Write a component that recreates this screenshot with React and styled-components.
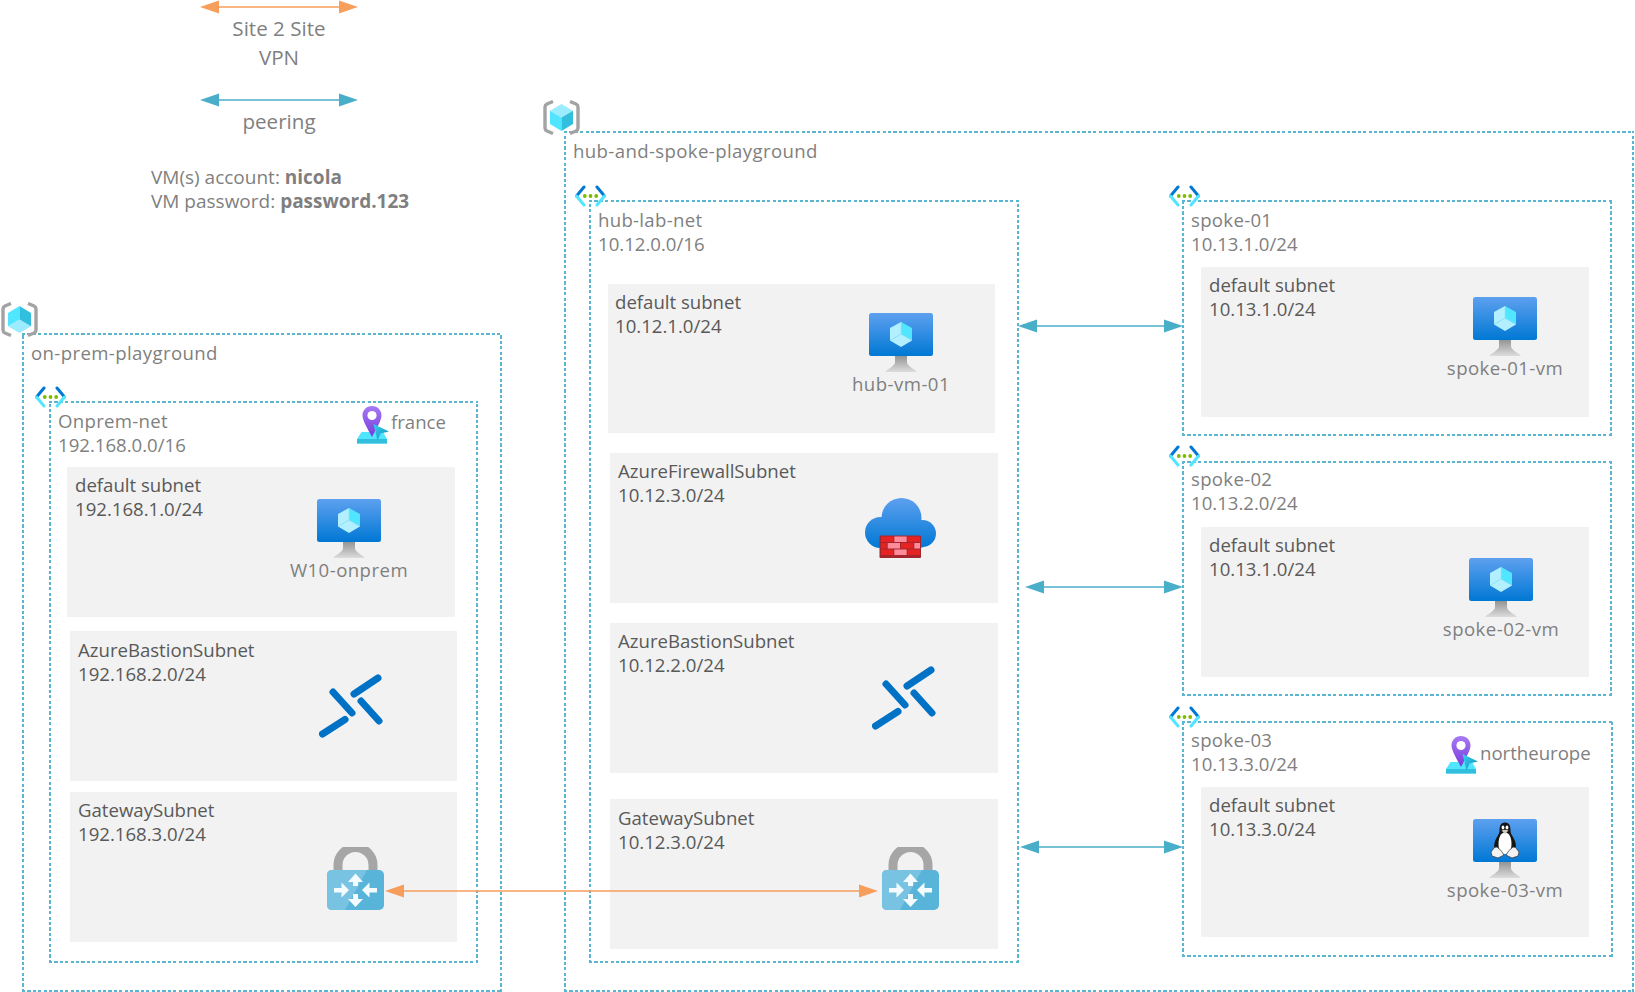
import styled, { createGlobalStyle } from 'styled-components'

const GlobalStyle = createGlobalStyle`
    html, body {
        margin: 0;
        background: #fff;
    }
    body {
        font-family: "Open Sans", "Liberation Sans", sans-serif;
        font-size: 18.6px;
        line-height: 24px;
        color: #7f7f7f;
        overflow: hidden;
    }
`

const DASH = '#5ab5d1'
const hDash = `repeating-linear-gradient(90deg, ${DASH} 0 3.2px, transparent 3.2px 5.4px)`
const vDash = `repeating-linear-gradient(0deg, ${DASH} 0 3.2px, transparent 3.2px 5.4px)`

const Canvas = styled.div`
    position: relative;
    width: 1635px;
    height: 992px;
    overflow: hidden;
`

const Zone = styled.section`
    position: absolute;
    left: ${p => p.$x}px;
    top: ${p => p.$y}px;
    width: ${p => p.$w}px;
    height: ${p => p.$h}px;
    box-sizing: border-box;
    padding: ${p => p.$pad || 8}px 9px;
    background:
        ${hDash} left top / 100% 2px no-repeat,
        ${hDash} left bottom / 100% 2px no-repeat,
        ${vDash} left top / 2px 100% no-repeat,
        ${vDash} right top / 2px 100% no-repeat;
`

const Subnet = styled.div`
    position: absolute;
    left: ${p => p.$x}px;
    top: ${p => p.$y}px;
    width: ${p => p.$w}px;
    height: ${p => p.$h}px;
    box-sizing: border-box;
    background: #f2f2f2;
    padding: ${p => p.$pad || 6}px ${p => p.$padX || 8}px;
    color: #595959;
`

const Line = styled.div`
    white-space: nowrap;
    letter-spacing: ${p => p.$spread || 0}px;
`

const IconSpot = styled.div`
    position: absolute;
    left: ${p => p.$x}px;
    top: ${p => p.$y}px;
    line-height: 0;
`

const VmNode = styled.div`
    position: absolute;
    left: ${p => p.$x}px;
    top: ${p => p.$y}px;
    width: 160px;
    display: flex;
    flex-direction: column;
    align-items: center;
    color: #7f7f7f;
`

const Place = styled.div`
    position: absolute;
    left: ${p => p.$x}px;
    top: ${p => p.$y}px;
    white-space: nowrap;
`

const Legend = styled.aside`
    position: absolute;
    left: 151px;
    top: 0;
    width: 256px;
    display: flex;
    flex-direction: column;
    align-items: center;
`

const Caption = styled.div`
    font-size: 20.6px;
    line-height: 29px;
    text-align: center;
    margin-top: -0.5px;
`

const LegendArrow = styled.div`
    line-height: 0;
    margin-top: ${p => p.$top || 0}px;
`

const Note = styled.div`
    align-self: flex-start;
    margin-top: 29.5px;
    font-size: 19px;
    white-space: nowrap;
    b {
        font-weight: 700;
    }
`

const Link = styled.div`
    position: absolute;
    left: ${p => p.$x}px;
    top: ${p => p.$y}px;
    line-height: 0;
`

const ORANGE = '#f79e5d'
const TEAL = '#49aec8'

const Defs = () => (
    <svg width="0" height="0" style={{ position: 'absolute' }}>
        <defs>
            <linearGradient id="screen" x1="0" y1="0" x2="0" y2="1">
                <stop offset="0" stopColor="#5ea0ef" />
                <stop offset="1" stopColor="#0078d4" />
            </linearGradient>
            <linearGradient id="stand" x1="0" y1="0" x2="0" y2="1">
                <stop offset="0" stopColor="#949494" />
                <stop offset="1" stopColor="#dcdcdc" />
            </linearGradient>
            <linearGradient id="cloud" gradientUnits="userSpaceOnUse" x1="0" y1="0" x2="0" y2="50">
                <stop offset="0" stopColor="#5ea0ef" />
                <stop offset="1" stopColor="#0078d4" />
            </linearGradient>
            <linearGradient id="pin" x1="0" y1="0" x2="0" y2="1">
                <stop offset="0" stopColor="#a67af4" />
                <stop offset="1" stopColor="#773adc" />
            </linearGradient>
            <linearGradient id="pointer" x1="0" y1="0" x2="1" y2="1">
                <stop offset="0" stopColor="#32d4f5" />
                <stop offset="1" stopColor="#198ab3" />
            </linearGradient>
        </defs>
    </svg>
)

const Arrow = ({ width, color }) => (
    <svg width={width} height="14" viewBox={`0 0 ${width} 14`}>
        <line x1="10" y1="7" x2={width - 10} y2="7" stroke={color} strokeWidth="1.6" />
        <polygon points="0,7 19,0.5 19,13.5" fill={color} />
        <polygon points={`${width},7 ${width - 19},0.5 ${width - 19},13.5`} fill={color} />
    </svg>
)

const ResourceGroupIcon = ({ flip }) => (
    <svg width="37" height="36" viewBox="0 0 37 36">
        <g fill="none" stroke="#a3a3a3" strokeWidth="3.4">
            <path d="M10 1.5 L4 4 Q2 5 2 7 V28 Q2 30 4 31 L10 33.5" />
            <path d="M27 1.5 L33 4 Q35 5 35 7 V28 Q35 30 33 31 L27 33.5" />
        </g>
        <g transform={flip ? 'translate(0 35) scale(1 -1)' : undefined}>
            <polygon points="18.5,4 30,10.7 18.5,17.5 7,10.7" fill="#9cebff" />
            <polygon points="7,10.7 18.5,17.5 18.5,31 7,24" fill="#50e6ff" />
            <polygon points="30,10.7 18.5,17.5 18.5,31 30,24" fill="#32bedd" />
        </g>
    </svg>
)

const VnetIcon = () => (
    <svg width="33" height="22" viewBox="0 0 33 22">
        <g fill="none" strokeWidth="3" strokeLinecap="round">
            <path d="M10 2 L2.5 11" stroke="#0078d4" />
            <path d="M2.5 11 L10 20" stroke="#50e6ff" />
            <path d="M23 2 L30.5 11" stroke="#0078d4" />
            <path d="M30.5 11 L23 20" stroke="#50e6ff" />
        </g>
        <circle cx="10.8" cy="11" r="1.9" fill="#7fba00" />
        <circle cx="16.5" cy="11" r="1.9" fill="#7fba00" />
        <circle cx="22.2" cy="11" r="1.9" fill="#7fba00" />
    </svg>
)

const Monitor = ({ children }) => (
    <svg width="64" height="59" viewBox="0 0 64 59">
        <path d="M26 43 H38 V49 C38 53 44 55 48 59 H16 C20 55 26 53 26 49 Z" fill="url(#stand)" />
        <rect width="64" height="43" rx="2.5" fill="url(#screen)" />
        {children}
    </svg>
)

const VmIcon = () => (
    <Monitor>
        <polygon points="32,9 21,15 21,27.5 32,21" fill="#b3f0ff" />
        <polygon points="32,9 43,15 43,27.5 32,21" fill="#50e6ff" />
        <polygon points="32,21 43,27.5 32,34 21,27.5" fill="#b3f0ff" />
        <path d="M32 9 V21 M21 27.5 L32 21 L43 27.5" stroke="#8fe6f8" strokeWidth="0.6" fill="none" />
    </Monitor>
)

const LinuxVmIcon = () => (
    <Monitor>
        <path d="M32 3.5 C27 3.5 26.5 8 26.5 12 C26.5 15 24 17.5 22.5 21 C21 24.5 20.5 28 22 31 L42 31 C43.5 28 43 24.5 41.5 21 C40 17.5 37.5 15 37.5 12 C37.5 8 37 3.5 32 3.5 Z" fill="#151515" />
        <path d="M32 13.5 C27.5 13.5 25.5 19 25.5 25 C25.5 31 27.5 35 32 35 C36.5 35 38.5 31 38.5 25 C38.5 19 36.5 13.5 32 13.5 Z" fill="#fff" />
        <ellipse cx="30" cy="8.5" rx="1.4" ry="1.9" fill="#fff" />
        <ellipse cx="34" cy="8.5" rx="1.4" ry="1.9" fill="#fff" />
        <path d="M28.5 11.5 Q32 10 35.5 11.5 L32 15 Z" fill="#cfcabb" />
        <path d="M24 28 L28 31.5 L31 36 L25 39 L19 37 L18 33 L21.5 28.5 Z" fill="#f2f2f2" stroke="#333" strokeWidth="0.7" />
        <path d="M40 28 L36 31.5 L33 36 L39 39 L45 37 L46 33 L42.5 28.5 Z" fill="#f2f2f2" stroke="#333" strokeWidth="0.7" />
    </Monitor>
)

const BastionIcon = () => (
    <svg width="64" height="64" viewBox="0 0 64 64">
        <g stroke="#0072c6" strokeWidth="7" strokeLinecap="round">
            <line x1="35" y1="20" x2="59" y2="4" />
            <line x1="14" y1="18" x2="33" y2="39" />
            <line x1="42" y1="27" x2="60" y2="47" />
            <line x1="26" y1="45.5" x2="3.5" y2="60" />
        </g>
    </svg>
)

const GatewayIcon = () => (
    <svg width="57" height="63" viewBox="0 0 57 63">
        <path d="M11 26 V18 A17.5 17.5 0 0 1 46 18 V26" fill="none" stroke="#a6a6a6" strokeWidth="9" />
        <rect y="23" width="57" height="40" rx="5" fill="#59b4d9" />
        <path d="M5 23 H40 L18 63 H5 Q0 63 0 58 V28 Q0 23 5 23 Z" fill="#78c3e1" />
        <g fill="#f4fbfe">
            <polygon points="28.5,26.5 36,35 31,35 31,39 26,39 26,35 21,35" />
            <polygon points="28.5,60 36,52 31,52 31,47 26,47 26,52 21,52" />
            <polygon points="22,43 14.5,35.5 14.5,41 7,41 7,45.5 14.5,45.5 14.5,50.5" />
            <polygon points="35,43 42.5,35.5 42.5,41 50,41 50,45.5 42.5,45.5 42.5,50.5" />
        </g>
    </svg>
)

const bricks = [
    [16, 38.5, 12.3, '#e62323'], [29.3, 38.5, 12.4, '#ff8a9a'], [42.7, 38.5, 12.3, '#e62323'],
    [16, 45, 5.7, '#e62323'], [22.7, 45, 12.3, '#ff8a9a'], [36, 45, 12.3, '#e62323'], [49.3, 45, 5.7, '#ff8a9a'],
    [16, 51.5, 12.3, '#e62323'], [29.3, 51.5, 12.4, '#ff8a9a'], [42.7, 51.5, 12.3, '#e62323'],
]

const FirewallIcon = () => (
    <svg width="71" height="60" viewBox="0 0 71 60">
        <g fill="url(#cloud)">
            <circle cx="36.5" cy="20" r="20" />
            <circle cx="15.5" cy="34.5" r="15.5" />
            <circle cx="57.5" cy="35.5" r="13.5" />
            <rect x="15" y="28" width="43" height="21.5" />
        </g>
        <rect x="14.5" y="37.5" width="41.5" height="22.5" rx="1" fill="#a4262c" />
        {bricks.map(([x, y, w, fill]) => <rect key={`${x}-${y}`} x={x} y={y} width={w} height="5.5" fill={fill} />)}
    </svg>
)

const LocationIcon = () => (
    <svg width="32" height="38" viewBox="0 0 32 38">
        <path d="M4.5 26 H26 L30 33 V37.5 H0 V33 Z" fill="#50e6ff" />
        <rect y="33" width="30" height="4.5" fill="#32bedd" />
        <path d="M15 0 C9.5 0 5.5 4.2 5.5 9.5 C5.5 15 12 25 15 31 C18 25 24.5 15 24.5 9.5 C24.5 4.2 20.5 0 15 0 Z" fill="url(#pin)" />
        <circle cx="15" cy="9.5" r="4.6" fill="#fff" />
        <polygon points="16.5,18 32,25.5 23.5,27.5 20.5,34.5" fill="url(#pointer)" />
    </svg>
)

const ICONS = {
    firewall: FirewallIcon,
    bastion: BastionIcon,
    gateway: GatewayIcon,
}

const regions = [
    {
        name: 'on-prem-playground', x: 22, y: 333, w: 480, h: 659, iconX: 1, iconY: 302, flip: true,
        nets: [{
            lines: ['Onprem-net', '192.168.0.0/16'], x: 49, y: 401, w: 429, h: 562, iconX: 34, iconY: 386,
            location: { name: 'france', x: 357, y: 406, textX: 391, textY: 410 },
            subnets: [
                { lines: ['default subnet', '192.168.1.0/24'], x: 67, y: 467, w: 388, h: 150, vm: { name: 'W10-onprem', cx: 349, y: 499 } },
                { lines: ['AzureBastionSubnet', '192.168.2.0/24'], x: 70, y: 631, w: 387, h: 150, pad: 7, icon: 'bastion', iconX: 319, iconY: 674 },
                { lines: ['GatewaySubnet', '192.168.3.0/24'], x: 70, y: 792, w: 387, h: 150, icon: 'gateway', iconX: 327, iconY: 847 },
            ],
        }],
    },
    {
        name: 'hub-and-spoke-playground', x: 564, y: 131, w: 1070, h: 861, iconX: 543, iconY: 100,
        nets: [
            {
                lines: ['hub-lab-net', '10.12.0.0/16'], x: 589, y: 200, w: 430, h: 763, iconX: 574, iconY: 185,
                subnets: [
                    { lines: ['default subnet', '10.12.1.0/24'], x: 608, y: 284, w: 387, h: 149, padX: 7, vm: { name: 'hub-vm-01', cx: 901, y: 313 } },
                    { lines: ['AzureFirewallSubnet', '10.12.3.0/24'], x: 610, y: 453, w: 388, h: 150, icon: 'firewall', iconX: 865, iconY: 498 },
                    { lines: ['AzureBastionSubnet', '10.12.2.0/24'], x: 610, y: 623, w: 388, h: 150, icon: 'bastion', iconX: 872, iconY: 666 },
                    { lines: ['GatewaySubnet', '10.12.3.0/24'], x: 610, y: 799, w: 388, h: 150, pad: 7, icon: 'gateway', iconX: 882, iconY: 847 },
                ],
            },
            {
                lines: ['spoke-01', '10.13.1.0/24'], x: 1182, y: 200, w: 430, h: 236, iconX: 1168, iconY: 185,
                subnets: [{ lines: ['default subnet', '10.13.1.0/24'], x: 1201, y: 267, w: 388, h: 150, vm: { name: 'spoke-01-vm', cx: 1505, y: 297 } }],
            },
            {
                lines: ['spoke-02', '10.13.2.0/24'], x: 1182, y: 461, w: 430, h: 235, pad: 6, iconX: 1168, iconY: 445,
                subnets: [{ lines: ['default subnet', '10.13.1.0/24'], x: 1201, y: 527, w: 388, h: 150, vm: { name: 'spoke-02-vm', cx: 1501, y: 558 } }],
            },
            {
                lines: ['spoke-03', '10.13.3.0/24'], x: 1182, y: 721, w: 431, h: 236, pad: 7, iconX: 1168, iconY: 706,
                location: { name: 'northeurope', x: 1446, y: 736, textX: 1480, textY: 741 },
                subnets: [{ lines: ['default subnet', '10.13.3.0/24'], x: 1201, y: 787, w: 388, h: 150, vm: { name: 'spoke-03-vm', cx: 1505, y: 819, linux: true } }],
            },
        ],
    },
]

const links = [
    { x: 1018, y: 319, width: 165, color: TEAL },
    { x: 1025, y: 580, width: 158, color: TEAL },
    { x: 1020, y: 840, width: 163, color: TEAL },
    { x: 385, y: 884, width: 493, color: ORANGE },
]

const NetSubnet = ({ subnet, net }) => {
    const Icon = ICONS[subnet.icon]
    const VmGlyph = subnet.vm && subnet.vm.linux ? LinuxVmIcon : VmIcon
    return (
        <Subnet
            $x={subnet.x - net.x}
            $y={subnet.y - net.y}
            $w={subnet.w}
            $h={subnet.h}
            $pad={subnet.pad}
            $padX={subnet.padX}
        >
            {subnet.lines.map(line => <Line key={line}>{line}</Line>)}
            {Icon && (
                <IconSpot $x={subnet.iconX - subnet.x} $y={subnet.iconY - subnet.y}>
                    <Icon />
                </IconSpot>
            )}
            {subnet.vm && (
                <VmNode $x={subnet.vm.cx - 80 - subnet.x} $y={subnet.vm.y - subnet.y}>
                    <VmGlyph />
                    <Line $spread={0.45}>{subnet.vm.name}</Line>
                </VmNode>
            )}
        </Subnet>
    )
}

const Net = ({ net, region }) => (
    <>
        <Zone $x={net.x - region.x} $y={net.y - region.y} $w={net.w} $h={net.h} $pad={net.pad}>
            <Line $spread={0.3}>{net.lines[0]}</Line>
            <Line>{net.lines[1]}</Line>
            {net.subnets.map(subnet => <NetSubnet key={subnet.lines[0]} subnet={subnet} net={net} />)}
        </Zone>
        <IconSpot $x={net.iconX - region.x} $y={net.iconY - region.y}>
            <VnetIcon />
        </IconSpot>
        {net.location && (
            <>
                <IconSpot $x={net.location.x - region.x} $y={net.location.y - region.y}>
                    <LocationIcon />
                </IconSpot>
                <Place $x={net.location.textX - region.x} $y={net.location.textY - region.y}>
                    {net.location.name}
                </Place>
            </>
        )}
    </>
)

const App = () => (
    <Canvas>
        <GlobalStyle />
        <Defs />
        <Legend>
            <LegendArrow><Arrow width={158} color={ORANGE} /></LegendArrow>
            <Caption>Site 2 Site<br />VPN</Caption>
            <LegendArrow $top={21.5}><Arrow width={158} color={TEAL} /></LegendArrow>
            <Caption>peering</Caption>
            <Note>
                VM(s) account: <b>nicola</b><br />
                VM password: <b>password.123</b>
            </Note>
        </Legend>
        {regions.map(region => (
            <div key={region.name}>
                <Zone $x={region.x} $y={region.y} $w={region.w} $h={region.h}>
                    <Line $spread={0.38}>{region.name}</Line>
                    {region.nets.map(net => <Net key={net.lines[0]} net={net} region={region} />)}
                </Zone>
                <IconSpot $x={region.iconX} $y={region.iconY}>
                    <ResourceGroupIcon flip={region.flip} />
                </IconSpot>
            </div>
        ))}
        {links.map(link => (
            <Link key={link.y} $x={link.x} $y={link.y}>
                <Arrow width={link.width} color={link.color} />
            </Link>
        ))}
    </Canvas>
)

export default App
